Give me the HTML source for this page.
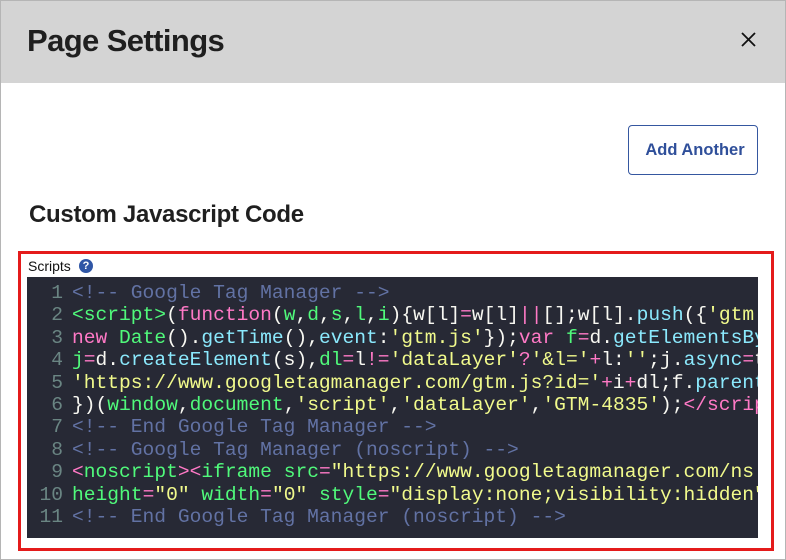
<!DOCTYPE html>
<html><head><meta charset="utf-8">
<style>
html,body{margin:0;padding:0;}
body{width:786px;height:560px;overflow:hidden;background:#fff;font-family:"Liberation Sans",sans-serif;position:relative;}
.frame{position:absolute;left:0;top:0;width:784px;height:558px;border:1px solid #b5b5b5;}
.hdr{position:absolute;left:1px;top:1px;width:784px;height:82px;background:#d4d4d4;}
.title{position:absolute;left:27px;top:23px;font-size:31px;font-weight:bold;color:#1f1f1f;letter-spacing:-0.6px;}
.close{position:absolute;left:741px;top:32px;}
.btn{position:absolute;left:628px;top:125px;width:128px;height:48px;border:1.5px solid #3557a0;border-radius:4px;color:#2f4f9a;font-weight:bold;font-size:16.5px;line-height:48px;text-align:center;box-sizing:content-box;padding-left:4px;width:124px;}
.h2{position:absolute;left:29px;top:201px;font-size:24px;font-weight:bold;color:#1f1f1f;letter-spacing:-0.3px;}
.red{position:absolute;left:18px;top:251px;width:750px;height:294px;border:3px solid #e41b1b;}
.lbl{position:absolute;left:28px;top:258px;font-size:14px;color:#111;}
.help{position:absolute;left:79px;top:259px;width:14px;height:14px;border-radius:50%;background:#2f56a6;color:#fff;font-size:11px;font-weight:bold;text-align:center;line-height:14px;}
.code{position:absolute;left:27px;top:277px;width:731px;height:261px;background:#272935;overflow:hidden;}
.code pre{margin:0;position:absolute;left:0;top:5px;font-family:"Liberation Mono",monospace;font-size:19.6px;line-height:22.4px;color:#f8f8f2;white-space:pre;}
.ln{display:inline-block;width:36px;text-align:right;color:#6a8583;margin-right:9px;}
.c{color:#6272a4}.g{color:#50fa7b}.p{color:#ff79c6}.b{color:#8be9fd}.y{color:#f1fa8c}
</style></head><body>
<div class="frame"></div>
<div class="hdr"></div>
<div class="title">Page Settings</div>
<svg class="close" width="15" height="15" viewBox="0 0 15 15"><path d="M1 1L14 14M14 1L1 14" stroke="#111" stroke-width="1.8" fill="none"/></svg>
<div class="btn">Add Another</div>
<div class="h2">Custom Javascript Code</div>
<div class="red"></div>
<div class="lbl">Scripts</div>
<div class="help">?</div>
<div class="code"><pre><span class="ln">1</span><span class="c">&lt;!-- Google Tag Manager --&gt;</span>
<span class="ln">2</span><span class="g">&lt;script&gt;</span>(<span class="p">function</span>(<span class="g">w</span>,<span class="g">d</span>,<span class="g">s</span>,<span class="g">l</span>,<span class="g">i</span>){w[l]<span class="p">=</span>w[l]<span class="p">||</span>[];w[l].<span class="b">push</span>({<span class="y">'gtm.start'</span>:
<span class="ln">3</span><span class="p">new</span> <span class="g">Date</span>().<span class="b">getTime</span>(),<span class="b">event</span>:<span class="y">'gtm.js'</span>});<span class="p">var</span> <span class="g">f</span><span class="p">=</span>d.<span class="b">getElementsByTagName</span>(s)[0],
<span class="ln">4</span><span class="g">j</span><span class="p">=</span>d.<span class="b">createElement</span>(s),<span class="g">dl</span><span class="p">=</span>l<span class="p">!=</span><span class="y">'dataLayer'</span><span class="p">?</span><span class="y">'&amp;l='</span><span class="p">+</span>l:<span class="y">''</span>;j.<span class="b">async</span><span class="p">=</span>true;j.src=
<span class="ln">5</span><span class="y">'https://www.googletagmanager.com/gtm.js?id='</span><span class="p">+</span>i<span class="p">+</span>dl;f.<span class="b">parentNode</span>.insertBefore(j,f);
<span class="ln">6</span>})(<span class="g">window</span>,<span class="g">document</span>,<span class="y">'script'</span>,<span class="y">'dataLayer'</span>,<span class="y">'GTM-4835'</span>);<span class="p">&lt;/script&gt;</span>
<span class="ln">7</span><span class="c">&lt;!-- End Google Tag Manager --&gt;</span>
<span class="ln">8</span><span class="c">&lt;!-- Google Tag Manager (noscript) --&gt;</span>
<span class="ln">9</span><span class="p">&lt;</span><span class="g">noscript</span><span class="p">&gt;&lt;</span><span class="g">iframe</span> <span class="g">src</span><span class="p">=</span><span class="y">"https://www.googletagmanager.com/ns.html?id=GTM-4835"</span>
<span class="ln">10</span><span class="g">height</span><span class="p">=</span><span class="y">"0"</span> <span class="g">width</span><span class="p">=</span><span class="y">"0"</span> <span class="g">style</span><span class="p">=</span><span class="y">"display:none;visibility:hidden"</span>&gt;
<span class="ln">11</span><span class="c">&lt;!-- End Google Tag Manager (noscript) --&gt;</span></pre></div>
</body></html>
